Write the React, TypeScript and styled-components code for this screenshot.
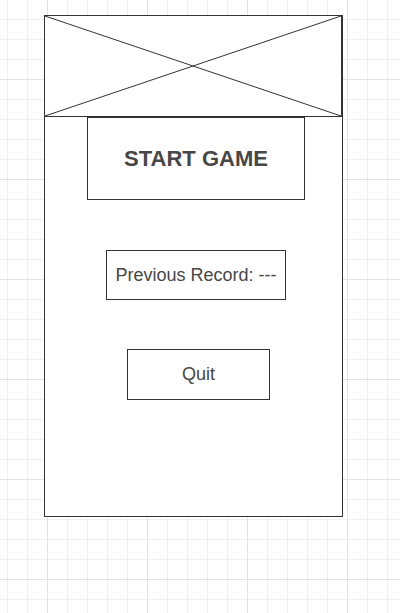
import React from 'react';
import styled, { createGlobalStyle } from 'styled-components';

const GlobalStyle = createGlobalStyle`
  html, body {
    margin: 0;
    padding: 0;
    height: 100%;
  }
  body {
    font-family: 'Liberation Sans', Arial, sans-serif;
    background-color: #ffffff;
    background-image:
      linear-gradient(to right, #e2e2e2 1px, transparent 1px),
      linear-gradient(to bottom, #e2e2e2 1px, transparent 1px),
      linear-gradient(to right, #f0f0f0 1px, transparent 1px),
      linear-gradient(to bottom, #f0f0f0 1px, transparent 1px);
    background-size: 100px 100px, 100px 100px, 20px 20px, 20px 20px;
    background-position: 47px 0, 0 79px, 7px 0, 0 19px;
  }
`;

const Page = styled.div`
  padding: 15px 0 0 44px;
`;

const Frame = styled.div`
  box-sizing: border-box;
  width: 299px;
  height: 502px;
  border: 1px solid #333333;
  background: #ffffff;
  display: flex;
  flex-direction: column;
`;

const Picture = styled.div`
  box-sizing: border-box;
  height: 101px;
  border-bottom: 1px solid #333333;
  border-right: 1px solid #333333;
  flex-shrink: 0;

  svg {
    display: block;
    width: 100%;
    height: 100%;
  }
`;

const Menu = styled.div`
  display: flex;
  flex-direction: column;
  align-items: flex-start;
`;

const MenuBox = styled.div<{ $w: number; $h: number; $left: number; $top: number }>`
  box-sizing: border-box;
  width: ${p => p.$w}px;
  height: ${p => p.$h}px;
  margin-left: ${p => p.$left}px;
  margin-top: ${p => p.$top}px;
  border: 1px solid #333333;
  background: #ffffff;
  display: flex;
  align-items: center;
  justify-content: center;
  color: #474747;
  white-space: nowrap;
`;

const Title = styled.span`
  font-size: 22px;
  font-weight: bold;
`;

const Label = styled.span`
  font-size: 18px;
`;

const App = () => {
  return (
    <>
      <GlobalStyle />
      <Page>
        <Frame>
          <Picture>
            <svg viewBox="0 0 296 100" preserveAspectRatio="none">
              <line x1="0" y1="0" x2="296" y2="100" stroke="#333" strokeWidth="1" vectorEffect="non-scaling-stroke" />
              <line x1="0" y1="100" x2="296" y2="0" stroke="#333" strokeWidth="1" vectorEffect="non-scaling-stroke" />
            </svg>
          </Picture>
          <Menu>
            <MenuBox $w={218} $h={83} $left={42} $top={0}>
              <Title>START GAME</Title>
            </MenuBox>
            <MenuBox $w={180} $h={50} $left={61} $top={50}>
              <Label>Previous Record: ---</Label>
            </MenuBox>
            <MenuBox $w={143} $h={51} $left={82} $top={49}>
              <Label>Quit</Label>
            </MenuBox>
          </Menu>
        </Frame>
      </Page>
    </>
  );
};

export default App;
